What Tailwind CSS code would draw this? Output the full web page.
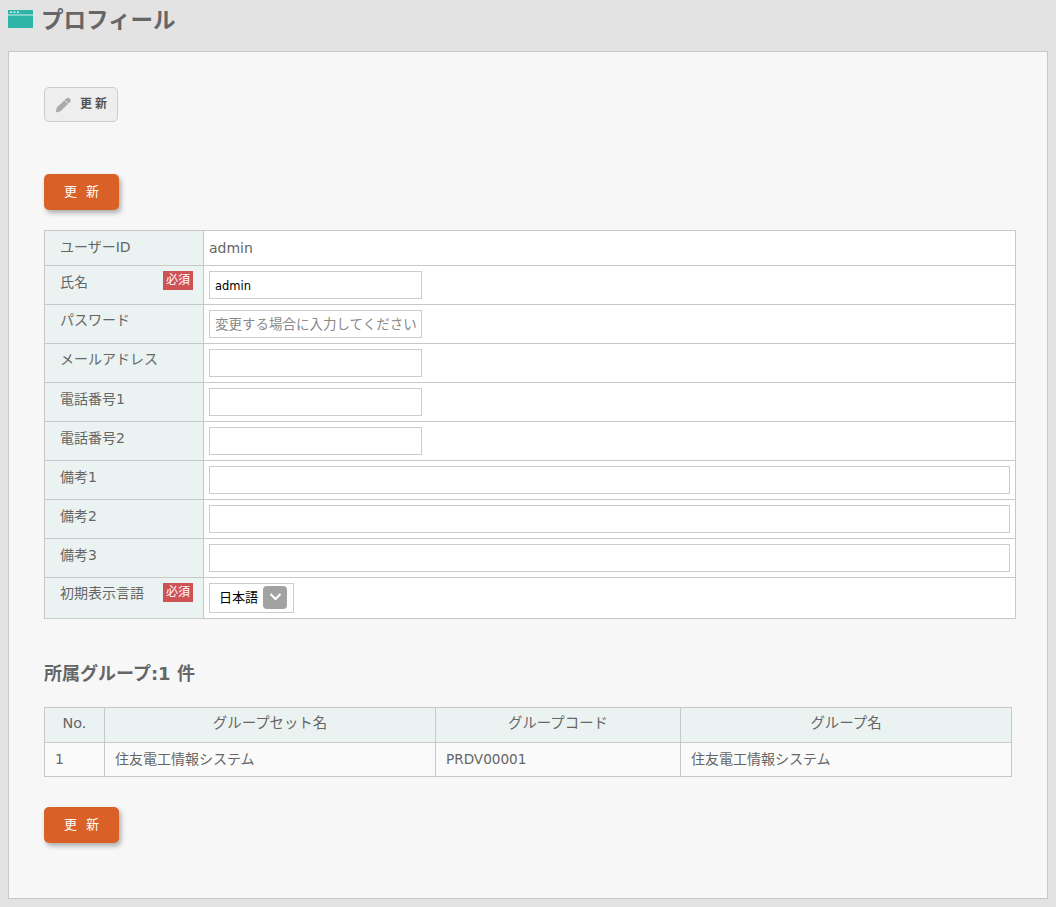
<!DOCTYPE html>
<html lang="ja">
  <head>
    <title>プロフィール</title>
    <meta charset="UTF-8" />
    <script src="https://cdn.jsdelivr.net/npm/@tailwindcss/browser@4"></script>
  </head>

  <body class="h-[907px] overflow-hidden bg-[#e3e3e3] font-['DejaVu_Sans','Noto_Sans_CJK_JP',sans-serif] text-[14px] text-[#666]">
    <!-- Title -->
    <div class="flex h-[51px] items-start pl-2 pt-[6px]">
      <svg class="mt-[4px] h-[18px] w-[25px]" viewBox="0 0 25 18">
        <rect width="25" height="18" fill="#2fb5a8" />
        <rect y="4.5" width="25" height="1" fill="#d5f0ed" />
        <rect x="2" y="1.5" width="2" height="1.5" fill="#d5f0ed" />
        <rect x="5.5" y="1.5" width="2" height="1.5" fill="#d5f0ed" />
        <rect x="9" y="1.5" width="2" height="1.5" fill="#d5f0ed" />
      </svg>
      <h1 class="ml-[8px] text-[22.5px] leading-[28px] font-bold">プロフィール</h1>
    </div>

    <!-- Panel -->
    <div class="mx-2 h-[848px] border border-[#c8c8c8] bg-[#f7f7f7] pl-[35px] pt-[35px]">
      <button class="flex h-[35px] w-[74px] items-center rounded-[5px] border border-[#ccc] bg-[#eee] pb-[2px] pl-[10px] text-[12px] font-bold tracking-[3px] text-[#555]">
        <svg class="mr-[9px] mt-[2px] h-[16px] w-[16px]" viewBox="0 0 16 16">
          <path d="M11.2 1.6C12 .6 13.2.5 14.2 1.3L15 2C15.9 2.9 15.9 4 15 4.9L5.6 14.2 .6 15.6 1.8 10.6Z" fill="#aaa" />
          <path d="M9.8 3.4 13 6.6" stroke="#eee" stroke-width="1" />
        </svg>
        更新
      </button>

      <button class="mt-[52px] flex h-[36px] w-[75px] items-center justify-center gap-[9px] rounded-[5px] bg-[#d96026] text-[13px] text-white shadow-[2px_3px_5px_rgba(0,0,0,0.3)]"><span>更</span><span>新</span></button>

      <!-- Form -->
      <table class="mt-[20px] w-[972px] table-fixed border-collapse border border-[#c8c8c8] bg-white">
        <colgroup>
          <col class="w-[159px]" />
          <col />
        </colgroup>
        <tbody>
          <tr class="h-[35px]">
            <th class="border border-[#c8c8c8] bg-[#ebf3f2] pb-[2px] pl-[15px] text-left font-normal">ユーザーID</th>
            <td class="border border-[#c8c8c8] pl-[5px]">admin</td>
          </tr>
          <tr class="h-[39px]">
            <th class="relative border border-[#c8c8c8] bg-[#ebf3f2] pl-[15px] pb-[6px] text-left font-normal">
              氏名
              <span class="absolute right-[10px] top-[5px] flex h-[19px] w-[30px] items-center justify-center bg-[#cd5355] pb-[2px] text-[12px] text-white">必須</span>
            </th>
            <td class="border border-[#c8c8c8] pl-[5px]">
              <input class="block h-[28px] w-[213px] border border-[#ccc] bg-white px-[5px] pt-[2px] text-[11.5px] text-black" type="text" value="admin" />
            </td>
          </tr>
          <tr class="h-[39px]">
            <th class="border border-[#c8c8c8] bg-[#ebf3f2] pl-[15px] pb-[8px] text-left font-normal">パスワード</th>
            <td class="border border-[#c8c8c8] pl-[5px]">
              <input class="block h-[28px] w-[213px] border border-[#ccc] bg-white px-[5px] text-[13.5px] placeholder:text-[#888]" type="text" placeholder="変更する場合に入力してください" />
            </td>
          </tr>
          <tr class="h-[39px]">
            <th class="border border-[#c8c8c8] bg-[#ebf3f2] pl-[15px] pb-[8px] text-left font-normal">メールアドレス</th>
            <td class="border border-[#c8c8c8] pl-[5px]"><input class="block h-[28px] w-[213px] border border-[#ccc] bg-white" type="text" /></td>
          </tr>
          <tr class="h-[39px]">
            <th class="border border-[#c8c8c8] bg-[#ebf3f2] pl-[15px] pb-[6px] text-left font-normal">電話番号1</th>
            <td class="border border-[#c8c8c8] pl-[5px]"><input class="block h-[28px] w-[213px] border border-[#ccc] bg-white" type="text" /></td>
          </tr>
          <tr class="h-[39px]">
            <th class="border border-[#c8c8c8] bg-[#ebf3f2] pl-[15px] pb-[6px] text-left font-normal">電話番号2</th>
            <td class="border border-[#c8c8c8] pl-[5px]"><input class="block h-[28px] w-[213px] border border-[#ccc] bg-white" type="text" /></td>
          </tr>
          <tr class="h-[39px]">
            <th class="border border-[#c8c8c8] bg-[#ebf3f2] pl-[15px] pb-[6px] text-left font-normal">備考1</th>
            <td class="border border-[#c8c8c8] pl-[5px]"><input class="block h-[28px] w-[801px] border border-[#ccc] bg-white" type="text" /></td>
          </tr>
          <tr class="h-[39px]">
            <th class="border border-[#c8c8c8] bg-[#ebf3f2] pl-[15px] pb-[6px] text-left font-normal">備考2</th>
            <td class="border border-[#c8c8c8] pl-[5px]"><input class="block h-[28px] w-[801px] border border-[#ccc] bg-white" type="text" /></td>
          </tr>
          <tr class="h-[39px]">
            <th class="border border-[#c8c8c8] bg-[#ebf3f2] pl-[15px] pb-[6px] text-left font-normal">備考3</th>
            <td class="border border-[#c8c8c8] pl-[5px]"><input class="block h-[28px] w-[801px] border border-[#ccc] bg-white" type="text" /></td>
          </tr>
          <tr class="h-[41px]">
            <th class="relative border border-[#c8c8c8] bg-[#ebf3f2] pl-[15px] pb-[10px] text-left font-normal">
              初期表示言語
              <span class="absolute right-[10px] top-[5px] flex h-[19px] w-[30px] items-center justify-center bg-[#cd5355] pb-[2px] text-[12px] text-white">必須</span>
            </th>
            <td class="border border-[#c8c8c8] pl-[5px]">
              <div class="flex h-[30px] w-[85px] items-center border border-[#ccc] bg-white pl-[9px] text-[13px] text-black">
                日本語
                <span class="mb-[2px] ml-[5px] flex h-[23px] w-[24px] items-center justify-center rounded-[4px] bg-[#a2a2a2]">
                  <svg class="h-[10px] w-[13px]" viewBox="0 0 13 10" fill="none" stroke="#fff" stroke-width="2"><path d="M1.5 2 6.5 7 11.5 2" /></svg>
                </span>
              </div>
            </td>
          </tr>
        </tbody>
      </table>

      <!-- Groups -->
      <h2 class="mt-[43px] text-[18px] leading-[24px] font-bold">所属グループ:1 件</h2>

      <table class="mt-[21px] w-[968px] table-fixed border-collapse border border-[#c8c8c8] bg-[#fafafa]">
        <colgroup>
          <col class="w-[60px]" />
          <col class="w-[331px]" />
          <col class="w-[245px]" />
          <col />
        </colgroup>
        <thead class="bg-[#ebf3f2]">
          <tr class="h-[35px]">
            <th class="border border-[#c8c8c8] pb-[2px] text-[14.4px] font-normal">No.</th>
            <th class="border border-[#c8c8c8] pb-[2px] text-[14.4px] font-normal">グループセット名</th>
            <th class="border border-[#c8c8c8] pb-[2px] text-[14.4px] font-normal">グループコード</th>
            <th class="border border-[#c8c8c8] pb-[2px] text-[14.4px] font-normal">グループ名</th>
          </tr>
        </thead>
        <tbody>
          <tr class="h-[34px]">
            <td class="border border-[#c8c8c8] pl-[10px]">1</td>
            <td class="border border-[#c8c8c8] pl-[10px]">住友電工情報システム</td>
            <td class="border border-[#c8c8c8] pl-[10px] text-[13.6px]">PRDV00001</td>
            <td class="border border-[#c8c8c8] pl-[10px]">住友電工情報システム</td>
          </tr>
        </tbody>
      </table>

      <button class="mt-[30px] flex h-[36px] w-[75px] items-center justify-center gap-[9px] rounded-[5px] bg-[#d96026] text-[13px] text-white shadow-[2px_3px_5px_rgba(0,0,0,0.3)]"><span>更</span><span>新</span></button>
    </div>
  </body>
</html>
